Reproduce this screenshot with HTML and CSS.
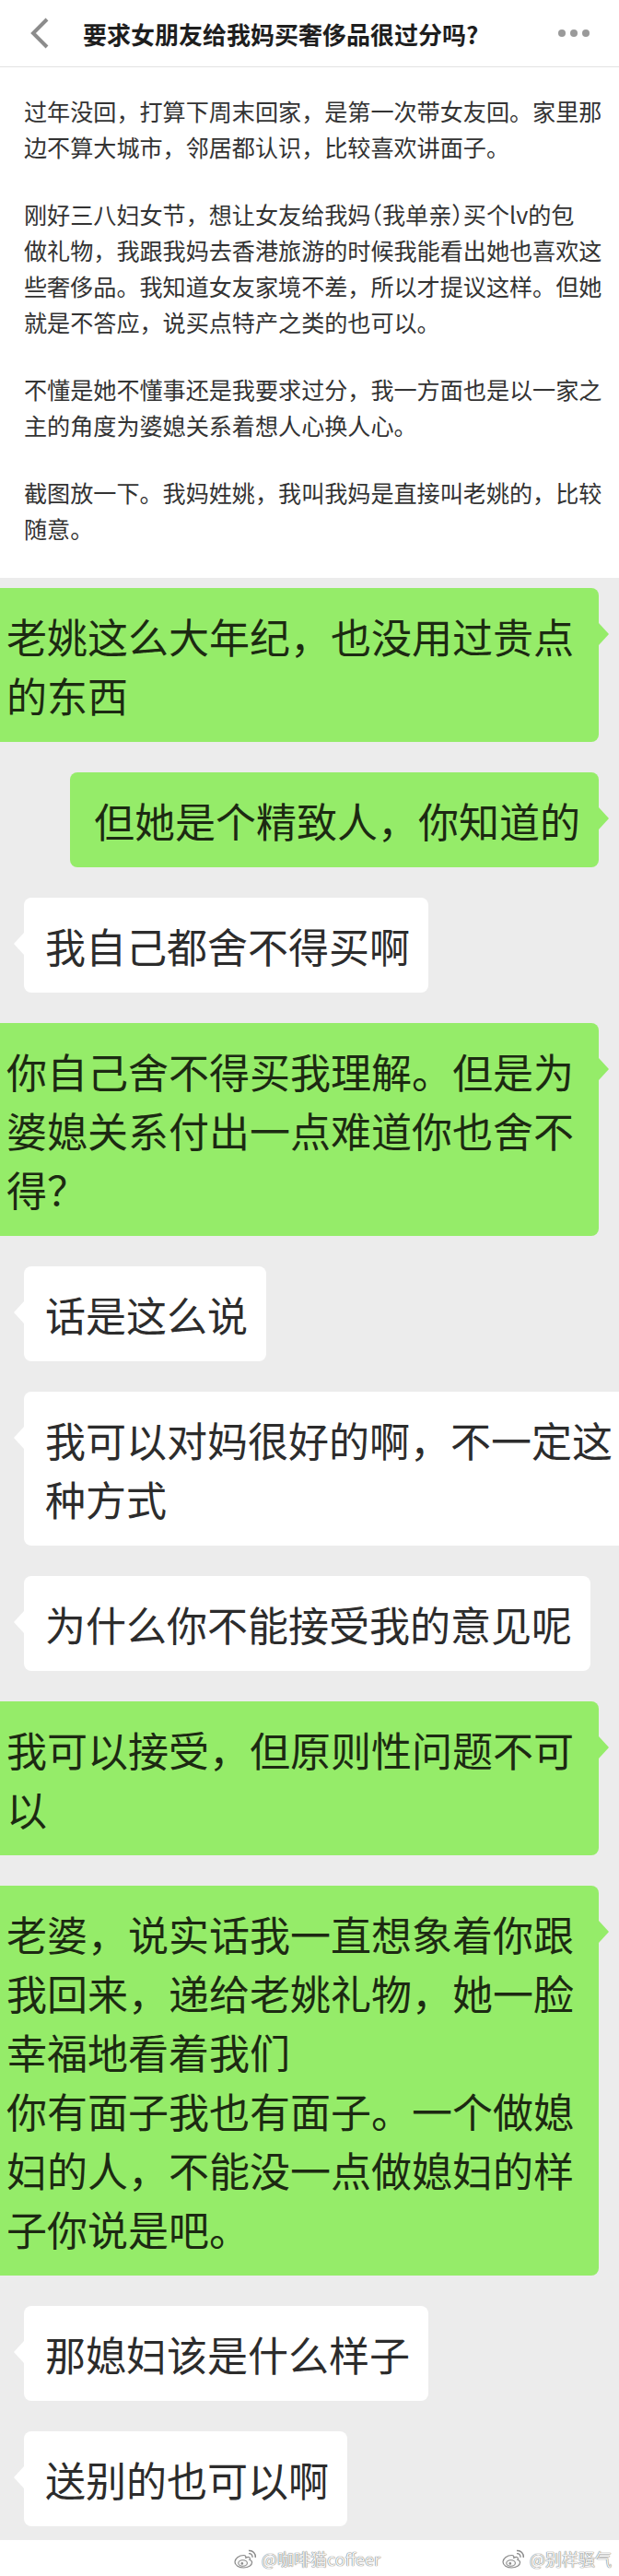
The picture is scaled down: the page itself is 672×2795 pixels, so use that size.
FILE: index.html
```html
<!DOCTYPE html>
<html lang="zh-CN">
<head>
    <meta charset="UTF-8">
    <meta name="viewport" content="width=device-width, initial-scale=1.0">
    <title>要求女朋友给我妈买奢侈品很过分吗?</title>
    <link rel="stylesheet" href="styles.css">
</head>
<body>
    <div id="page">
        <div id="top-bar">
            <svg class="back" width="22" height="36" viewBox="0 0 22 36">
                <polyline points="19,3 4,18 19,33" fill="none" stroke="#8c8c8c" stroke-width="4"/>
            </svg>
            <h1 class="title">要求女朋友给我妈买奢侈品很过分吗?</h1>
            <div class="more"><span></span><span></span><span></span></div>
        </div>

        <div id="post">
            <p>过年没回，打算下周末回家，是第一次带女友回。家里那<br>边不算大城市，邻居都认识，比较喜欢讲面子。</p>
            <p>刚好三八妇女节，想让女友给我妈<span class="halt">（</span>我单亲<span class="halt">）</span>买个lv的包<br>做礼物，我跟我妈去香港旅游的时候我能看出她也喜欢这<br>些奢侈品。我知道女友家境不差，所以才提议这样。但她<br>就是不答应，说买点特产之类的也可以。</p>
            <p>不懂是她不懂事还是我要求过分，我一方面也是以一家之<br>主的角度为婆媳关系着想人心换人心。</p>
            <p>截图放一下。我妈姓姚，我叫我妈是直接叫老姚的，比较<br>随意。</p>
        </div>

        <div id="chat">
            <div class="row me"><div class="bubble">老姚这么大年纪，也没用过贵点的东西</div></div>
            <div class="row me"><div class="bubble">但她是个精致人，你知道的</div></div>
            <div class="row them"><div class="bubble">我自己都舍不得买啊</div></div>
            <div class="row me"><div class="bubble">你自己舍不得买我理解。但是为婆媳关系付出一点难道你也舍不得？</div></div>
            <div class="row them"><div class="bubble">话是这么说</div></div>
            <div class="row them"><div class="bubble">我可以对妈很好的啊，不一定这种方式</div></div>
            <div class="row them"><div class="bubble">为什么你不能接受我的意见呢</div></div>
            <div class="row me"><div class="bubble">我可以接受，但原则性问题不可以</div></div>
            <div class="row me"><div class="bubble">老婆，说实话我一直想象着你跟我回来，递给老姚礼物，她一脸幸福地看着我们<br>你有面子我也有面子。一个做媳妇的人，不能没一点做媳妇的样子你说是吧。</div></div>
            <div class="row them"><div class="bubble">那媳妇该是什么样子</div></div>
            <div class="row them"><div class="bubble">送别的也可以啊</div></div>
        </div>

        <div id="footer">
            <div class="mark">
                <svg width="26" height="22" viewBox="0 0 26 22">
                    <path d="M10.5 7.5C5.5 7.5 1 11.2 1 14.8C1 18.3 5.2 21 10.5 21C15.8 21 19.6 18.3 19.6 15.3C19.6 13.4 18.1 12.8 17 12.5C17.6 11.2 17.5 9.7 16 9.5C14.7 9.3 13.3 10.1 12.8 10.3C13.1 8.8 12.7 7.5 10.5 7.5Z" fill="#fafafa" stroke="#8a8a8a" stroke-width="1.2"/>
                    <ellipse cx="9.6" cy="16" rx="4.8" ry="3.3" fill="none" stroke="#8a8a8a" stroke-width="1.1"/>
                    <circle cx="8.8" cy="16.4" r="1.3" fill="#8a8a8a"/>
                    <path d="M16 2.5A6.5 6.5 0 0 1 23.3 10" fill="none" stroke="#8a8a8a" stroke-width="1.4"/>
                    <path d="M16 5.8A3.4 3.4 0 0 1 20 9.8" fill="none" stroke="#8a8a8a" stroke-width="1.3"/>
                </svg>
                <span>@咖啡猫coffeer</span>
            </div>
            <div class="mark">
                <svg width="26" height="22" viewBox="0 0 26 22">
                    <path d="M10.5 7.5C5.5 7.5 1 11.2 1 14.8C1 18.3 5.2 21 10.5 21C15.8 21 19.6 18.3 19.6 15.3C19.6 13.4 18.1 12.8 17 12.5C17.6 11.2 17.5 9.7 16 9.5C14.7 9.3 13.3 10.1 12.8 10.3C13.1 8.8 12.7 7.5 10.5 7.5Z" fill="#fafafa" stroke="#8a8a8a" stroke-width="1.2"/>
                    <ellipse cx="9.6" cy="16" rx="4.8" ry="3.3" fill="none" stroke="#8a8a8a" stroke-width="1.1"/>
                    <circle cx="8.8" cy="16.4" r="1.3" fill="#8a8a8a"/>
                    <path d="M16 2.5A6.5 6.5 0 0 1 23.3 10" fill="none" stroke="#8a8a8a" stroke-width="1.4"/>
                    <path d="M16 5.8A3.4 3.4 0 0 1 20 9.8" fill="none" stroke="#8a8a8a" stroke-width="1.3"/>
                </svg>
                <span>@别样骚气</span>
            </div>
        </div>
    </div>
</body>
</html>
```

FILE: styles.css
```css
body {
    margin: 0;
    padding: 0;
    background: #fff;
    font-family: "Noto Sans CJK SC", "Noto Sans", sans-serif;
}
#page {
    width: 672px;
    overflow: hidden;
}
#top-bar {
    display: flex;
    align-items: center;
    height: 72px;
    border-bottom: 1px solid #e2e2e2;
}
.back {
    flex-shrink: 0;
    margin-left: 32px;
}
.title {
    margin: 0 0 0 36px;
    font-size: 26px;
    font-weight: 700;
    color: #1e1e1e;
    white-space: nowrap;
}
.more {
    display: flex;
    gap: 5px;
    margin-left: auto;
    margin-right: 32px;
}
.more span {
    width: 8px;
    height: 8px;
    border-radius: 50%;
    background: #9a9a9a;
}
#post {
    padding: 28px 0 34px 26px;
    font-size: 25.1px;
    line-height: 39px;
    color: #333;
    white-space: nowrap;
}
#post p {
    margin: 0 0 34px;
}
#post p:last-child {
    margin-bottom: 0;
}
.halt {
    font-feature-settings: "halt";
}
#chat {
    display: flex;
    flex-direction: column;
    gap: 33px;
    padding: 11px 0 15px;
    background: #ececec;
}
.row {
    display: flex;
}
.row.me {
    justify-content: flex-end;
    padding-right: 22px;
}
.row.them {
    justify-content: flex-start;
    padding-left: 26px;
}
.bubble {
    position: relative;
    flex-shrink: 0;
    box-sizing: border-box;
    max-width: 669px;
    padding: 20px 20px 19px 26px;
    border-radius: 8px;
    font-size: 44px;
    line-height: 64px;
}
.me .bubble {
    background: #95ec69;
    color: #1c2a12;
}
.them .bubble {
    background: #fff;
    color: #2c2c2c;
    padding-left: 23px;
}
.bubble::after {
    content: "";
    position: absolute;
    top: 38px;
    border-top: 12px solid transparent;
    border-bottom: 12px solid transparent;
}
.me .bubble::after {
    right: -11px;
    border-left: 11px solid #95ec69;
}
.them .bubble::after {
    left: -11px;
    border-right: 11px solid #fff;
}
#footer {
    display: flex;
    align-items: center;
    justify-content: flex-end;
    gap: 132px;
    height: 39px;
    padding-right: 8px;
    background: #fff;
}
.mark {
    display: flex;
    align-items: center;
    gap: 4px;
    font-size: 18px;
    color: #f4f4f4;
    text-shadow: 0 0 1px #6f6f6f, 0 0 1px #6f6f6f;
}
```
